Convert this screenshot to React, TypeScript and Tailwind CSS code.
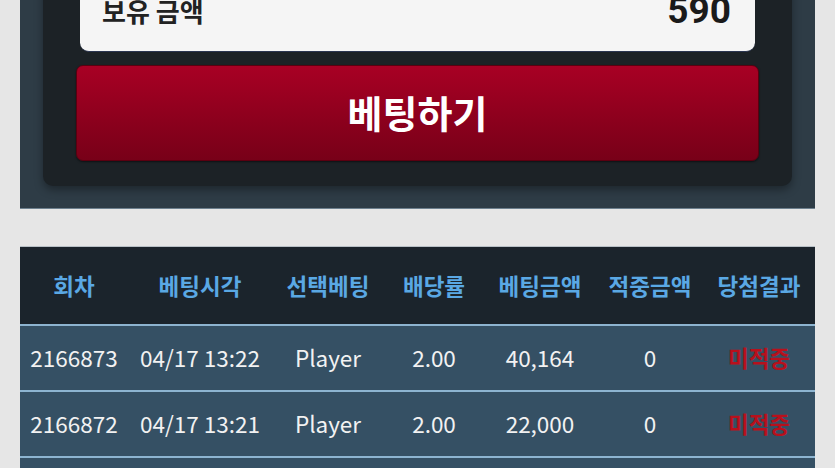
const cols = "grid grid-cols-[108px_144px_112px_100px_112px_108px_110px]";

const headers = ["회차", "베팅시각", "선택베팅", "배당률", "베팅금액", "적중금액", "당첨결과"];

const rows = [
  { round: "2166873", time: "04/17 13:22", pick: "Player", odds: "2.00", amount: "40,164", win: "0", result: "미적중" },
  { round: "2166872", time: "04/17 13:21", pick: "Player", odds: "2.00", amount: "22,000", win: "0", result: "미적중" },
  { round: "2166871", time: "04/17 13:20", pick: "Banker", odds: "1.95", amount: "10,000", win: "0", result: "미적중" },
];

export default function App() {
  return (
    <div className="min-h-screen overflow-hidden bg-[#e6e6e6] font-['Noto_Sans_CJK_KR','Noto_Sans',sans-serif]">
      <div className="mx-[20px] -mt-[40px] border-b border-[#6d808e] bg-[#2e3c46] px-[23px] pb-[22px]">
        <div className="rounded-b-[10px] bg-[#1c2226] px-[33px] pb-[25px] shadow-[0_4px_8px_rgba(0,0,0,0.35)]">
          <div className="mx-[4px] flex h-[92px] items-center justify-between rounded-b-[9px] border-b border-[#2a3550] bg-[#f5f5f5] pl-[22px] pr-[24px] pt-[10px]">
            <span className="text-[26px] font-bold text-[#222]">보유 금액</span>
            <span className="font-['Roboto',sans-serif] text-[37px] font-bold text-[#1a1a1a]">590</span>
          </div>
          <button className="mt-[13px] flex h-[96px] w-full items-center justify-center rounded-[7px] border border-[#5a0010] bg-gradient-to-b from-[#a80024] to-[#780018] pb-[4px] text-[38px] font-bold text-white shadow-[0_1px_2px_rgba(0,0,0,0.5)]">
            베팅하기
          </button>
        </div>
      </div>

      <div className="mx-[20px] mt-[37px] border-t border-[#b8c0c6]">
        <div className={`${cols} h-[77px] items-center bg-[#1b242c] text-center text-[22.5px] font-bold text-[#5aa8e4]`}>
          {headers.map((h) => (
            <div key={h}>{h}</div>
          ))}
        </div>
        {rows.map((r) => (
          <div
            key={r.round}
            className={`${cols} h-[66px] items-center border-t-2 border-[#8db4d0] bg-[#355064] text-center text-[22.5px] text-[#f2f2f2]`}
          >
            <div>{r.round}</div>
            <div>{r.time}</div>
            <div>{r.pick}</div>
            <div>{r.odds}</div>
            <div>{r.amount}</div>
            <div>{r.win}</div>
            <div className="font-bold text-[#b8101c]">{r.result}</div>
          </div>
        ))}
      </div>
    </div>
  );
}
